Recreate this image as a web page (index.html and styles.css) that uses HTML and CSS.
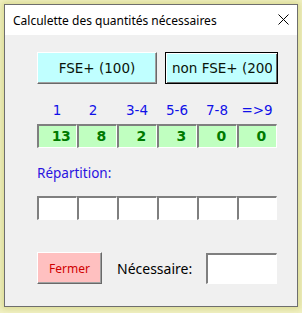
FILE: index.html
```html
<!DOCTYPE html>
<html lang="fr">
<head>
<meta charset="utf-8">
<title>Calculette</title>
<link rel="stylesheet" href="styles.css">
</head>
<body>
<div class="window">
  <div class="titlebar">
    <span class="title">Calculette des quantités nécessaires</span>
    <svg class="close" width="11" height="11" viewBox="0 0 11 11"><path d="M0.5 0.5 L10.5 10.5 M10.5 0.5 L0.5 10.5" stroke="#000" stroke-width="1" fill="none"/></svg>
  </div>
  <div class="content">
    <div class="btn-row">
      <div class="btn btn-fse">FSE+ (100)</div>
      <div class="btn btn-nonfse"><span class="clip">non FSE+ (200)</span></div>
    </div>
    <div class="grid labels">
      <span>1</span><span class="lbl-2">2</span><span>3-4</span><span>5-6</span><span>7-8</span><span>=&gt;9</span>
    </div>
    <div class="grid counts">
      <div class="cell green">13</div>
      <div class="cell green">8</div>
      <div class="cell green">2</div>
      <div class="cell green">3</div>
      <div class="cell green">0</div>
      <div class="cell green">0</div>
    </div>
    <div class="rep">Répartition:</div>
    <div class="grid inputs">
      <div class="cell white"></div>
      <div class="cell white"></div>
      <div class="cell white"></div>
      <div class="cell white"></div>
      <div class="cell white"></div>
      <div class="cell white"></div>
    </div>
    <div class="bottom-row">
      <div class="btn btn-close">Fermer</div>
      <span class="need">Nécessaire:</span>
      <div class="cell white need-box"></div>
    </div>
  </div>
</div>
</body>
</html>
```
FILE: styles.css
```css
html, body {
  margin: 0;
  padding: 0;
}
body {
  background: #f1f1c4;
  padding: 4px;
  width: 302px;
  height: 313px;
  box-sizing: border-box;
  overflow: hidden;
}
.window {
  width: 294px;
  height: 303px;
  box-sizing: border-box;
  border: 1px solid #6e6e6e;
  background: #f0f0f0;
  box-shadow: 0 0 6px 2px rgba(200, 200, 110, 0.6);
}
.titlebar {
  height: 30px;
  background: #fff;
  display: flex;
  align-items: center;
  justify-content: space-between;
  padding: 0 8px 0 8px;
}
.title {
  font-family: "Noto Sans", sans-serif;
  font-size: 12px;
  color: #000;
}
.close {
  display: block;
  margin-top: -1px;
}
.content {
  padding: 17px 0 0 32px;
}
.btn-row {
  display: flex;
  gap: 8px;
}
.btn {
  box-sizing: border-box;
  height: 32px;
  display: flex;
  align-items: center;
  justify-content: center;
  font-family: "DejaVu Sans", sans-serif;
  font-size: 13.5px;
  color: #0a140a;
}
.btn-fse {
  width: 120px;
  background: #c0ffff;
  border: 1px solid;
  border-color: #ffffff #696969 #696969 #ffffff;
  box-shadow: inset -1px -1px 0 #a0a0a0;
}
.btn-nonfse {
  width: 113px;
  background: #c0ffff;
  border: 1px solid #000;
  box-shadow: inset 1px 1px 0 #fff, inset -1px -1px 0 #696969;
  justify-content: flex-start;
  padding-left: 6px;
  overflow: hidden;
  white-space: nowrap;
}
.clip {
  display: block;
  width: 100px;
  overflow: hidden;
}
.grid {
  display: grid;
  grid-template-columns: repeat(6, 40px);
}
.labels {
  margin-top: 18px;
  height: 16px;
  line-height: 16px;
  font-family: "DejaVu Sans", sans-serif;
  font-size: 13.5px;
  color: #1010e8;
  text-align: center;
}
.lbl-2 {
  padding-right: 8px;
}
.counts {
  margin-top: 6px;
}
.cell {
  box-sizing: border-box;
  height: 24px;
  border-style: solid;
  border-width: 2px 1px 1px 2px;
  border-color: #7f7f7f #ffffff #ffffff #7f7f7f;
}
.green {
  background: #c0ffc0;
  font-family: "DejaVu Sans", sans-serif;
  font-weight: bold;
  font-size: 14px;
  letter-spacing: -0.5px;
  color: #007a00;
  text-align: center;
  line-height: 21px;
  padding-left: 7px;
}
.white {
  background: #ffffff;
}
.rep {
  margin-top: 16px;
  height: 18px;
  line-height: 18px;
  font-family: "Noto Sans", sans-serif;
  font-size: 13.5px;
  color: #2a14e0;
}
.inputs {
  margin-top: 14px;
}
.bottom-row {
  margin-top: 32px;
  display: flex;
  align-items: center;
}
.btn-close {
  width: 65px;
  background: #ffc0c0;
  border: 1px solid;
  border-color: #ffffff #696969 #696969 #ffffff;
  box-shadow: inset -1px -1px 0 #a0a0a0;
  font-family: "Noto Sans", sans-serif;
  font-size: 12px;
  color: #d00000;
}
.need {
  margin-left: 15px;
  font-family: "Noto Sans", sans-serif;
  font-size: 14px;
  color: #000;
}
.need-box {
  margin-left: 14px;
  width: 71px;
  height: 31px;
}
```
